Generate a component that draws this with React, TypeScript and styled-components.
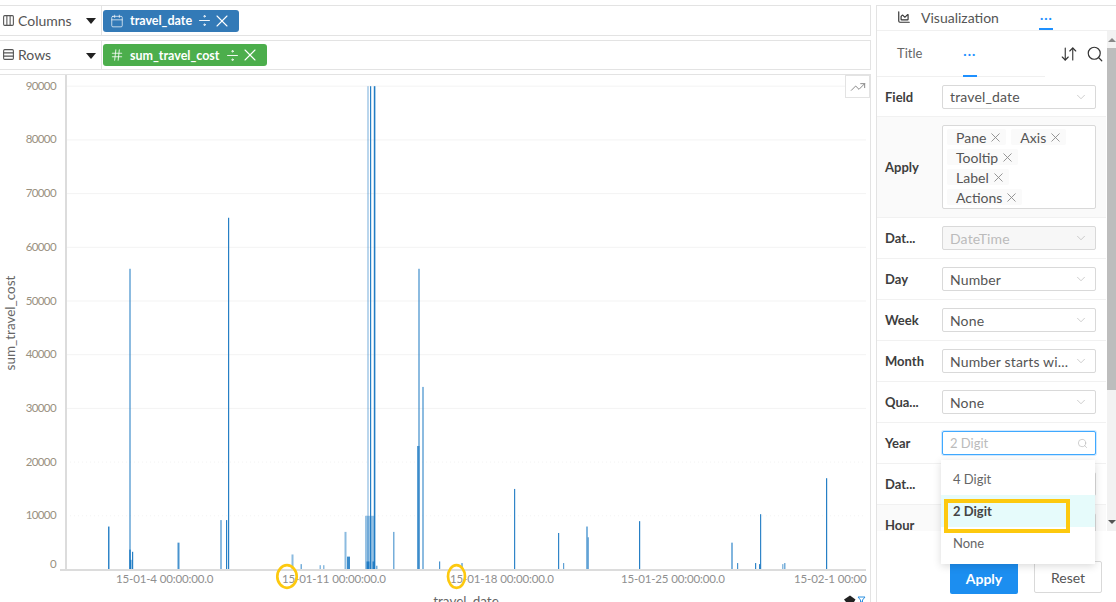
import React from "react";
import styled, { createGlobalStyle } from "styled-components";
import {
  Calendar,
  ChartArea,
  Columns3,
  Hash,
  Search,
  X,
  ChevronDown,
  Divide,
  Rows3,
  TrendingUp,
  ArrowDownUp,
} from "lucide-react";

const GlobalStyle = createGlobalStyle`
  html, body {
    margin: 0;
    padding: 0;
    background: #fff;
    overflow: hidden;
  }
  body {
    font-family: "Lato", "Open Sans", sans-serif;
    color: #555;
  }
`;

const Page = styled.div`
  width: 1116px;
  height: 602px;
  display: flex;
  overflow: hidden;
  background: #fff;
`;

const LeftColumn = styled.div`
  width: 871px;
  flex: none;
  display: flex;
  flex-direction: column;
  padding-top: 5px;
  gap: 4px;
`;

const ShelfBar = styled.div`
  height: 29px;
  display: flex;
  align-items: center;
  border-top: 1px solid #e3e3e3;
  border-bottom: 1px solid #e3e3e3;
  border-right: 1px solid #e3e3e3;
`;

const ShelfName = styled.div`
  width: 102px;
  height: 100%;
  flex: none;
  display: flex;
  align-items: center;
  gap: 3px;
  padding-left: 2px;
  box-sizing: border-box;
  font-size: 14px;
  color: #555;
  border-right: 1px solid #e3e3e3;
  position: relative;
`;

const Caret = styled.span`
  position: absolute;
  right: 5px;
  top: 12px;
  border-left: 5px solid transparent;
  border-right: 5px solid transparent;
  border-top: 6px solid #222;
`;

const Pill = styled.div<{ $color: string }>`
  margin: 1px 0 0 1px;
  height: 22px;
  display: flex;
  align-items: center;
  gap: 4px;
  padding: 0 7px;
  border-radius: 3px;
  background: ${(p) => p.$color};
  color: #fff;
  font-size: 12.5px;
  font-weight: 700;
`;

const PillLead = styled.span`
  display: flex;
  margin-right: 2px;
  color: rgba(255, 255, 255, 0.8);
`;

const PillClose = styled(X)`
  margin-left: -5px;
`;

const PlotArea = styled.div`
  flex: 1;
  border-top: 1px solid #e3e3e3;
  border-right: 1px solid #e3e3e3;
  position: relative;
`;

const ChartSvg = styled.svg`
  display: block;
`;

const TickLabel = styled.text`
  font-family: "Lato", sans-serif;
  font-size: 11.5px;
  letter-spacing: -0.6px;
  fill: #99917f;
`;

const XLabel = styled.text`
  font-family: "Lato", sans-serif;
  font-size: 11.5px;
  letter-spacing: -0.15px;
  fill: #8f8f8f;
`;

const AxisTitle = styled.text`
  font-family: "Lato", sans-serif;
  font-size: 13.5px;
  fill: #666;
  text-anchor: middle;
`;

const TrendButton = styled.div`
  position: absolute;
  top: 0;
  right: 0;
  width: 25px;
  height: 23px;
  display: flex;
  align-items: center;
  justify-content: center;
  border: 1px solid #e3e3e3;
  box-sizing: border-box;
  color: #777;
  background: #fff;
`;

const Gutter = styled.div`
  width: 5px;
  flex: none;
`;

const SidePanel = styled.div`
  width: 240px;
  flex: none;
  margin-top: 5px;
  border-top: 1px solid #e3e3e3;
  border-left: 1px solid #e3e3e3;
  display: flex;
  flex-direction: column;
  position: relative;
`;

const TabRow = styled.div`
  height: 22px;
  flex: none;
  display: flex;
  align-items: center;
  border-bottom: 1px solid #f0f0f0;
  font-size: 14px;
  color: #555;
  padding: 0 0 2px 20px;
  gap: 10px;
  position: relative;
  z-index: 1;
`;

const Dots = styled.span`
  color: #1e90ff;
  font-weight: 700;
  letter-spacing: 1px;
  font-size: 12px;
`;

const TabDots = styled(Dots)`
  margin-left: 31px;
`;

const TabUnderline = styled.span<{ $left: number }>`
  position: absolute;
  left: ${(p) => p.$left}px;
  bottom: 0;
  width: 14px;
  height: 2px;
  background: #1e90ff;
`;

const ScrollBody = styled.div`
  height: 500px;
  display: flex;
  position: relative;
  overflow: hidden;
`;

const Form = styled.div`
  width: 229px;
  flex: none;
`;

const SubTabs = styled.div`
  height: 46px;
  display: flex;
  align-items: center;
  position: relative;
  font-size: 13px;
  color: #666;
  padding: 0 0 2px 20px;
  box-sizing: border-box;
`;

const SubTabsLine = styled.span`
  position: absolute;
  left: 0;
  bottom: 0;
  width: 168px;
  height: 1px;
  background: #f0f0f0;
`;

const SubTabsDots = styled(Dots)`
  margin-left: 41px;
`;

const SubTools = styled.div`
  position: absolute;
  right: 2px;
  top: 14px;
  display: flex;
  gap: 8px;
  color: #333;
`;

const FieldRow = styled.div<{ $height?: number; $shade?: boolean }>`
  height: ${(p) => p.$height ?? 41}px;
  display: flex;
  align-items: center;
  box-sizing: border-box;
  border-bottom: 1px solid #f1f1f1;
  background: ${(p) => (p.$shade ? "#fafafa" : "#fff")};
  padding-left: 8px;
`;

const FieldLabel = styled.div`
  width: 57px;
  flex: none;
  font-size: 13px;
  font-weight: 700;
  color: #3d3d3d;
`;

const SelectBox = styled.div<{ $focus?: boolean; $muted?: boolean }>`
  width: 154px;
  height: 24px;
  box-sizing: border-box;
  border: 1px solid ${(p) => (p.$focus ? "#40a9ff" : "#d9d9d9")};
  box-shadow: ${(p) => (p.$focus ? "0 0 0 1px rgba(24,144,255,.2)" : "none")};
  border-radius: 2px;
  display: flex;
  align-items: center;
  justify-content: space-between;
  padding: 0 7px;
  font-size: ${(p) => (p.$focus ? 13 : 14)}px;
  letter-spacing: ${(p) => (p.$focus ? 0 : 0.15)}px;
  color: ${(p) => (p.$muted ? "#bbb" : "#555")};
  background: ${(p) => (p.$muted && !p.$focus ? "#f7f7f7" : "#fff")};
  white-space: nowrap;
  overflow: hidden;
`;

const TagBox = styled.div`
  width: 154px;
  height: 84px;
  box-sizing: border-box;
  border: 1px solid #d9d9d9;
  border-radius: 2px;
  padding: 3px 24px 3px 4px;
  display: flex;
  flex-wrap: wrap;
  align-content: flex-start;
  gap: 4px 5px;
  background: #fff;
`;

const Tag = styled.span`
  height: 16px;
  display: inline-flex;
  align-items: center;
  gap: 2px;
  padding: 0 3px 0 9px;
  background: #fafafa;
  font-size: 14px;
  color: #555;
  border-radius: 2px;
`;

const Scrollbar = styled.div`
  width: 10px;
  flex: none;
  margin-left: auto;
  background: #f2f2f2;
  display: flex;
  flex-direction: column;
  align-items: center;
  position: relative;
`;

const ScrollThumb = styled.div`
  position: absolute;
  top: 17px;
  left: 0;
  width: 100%;
  height: 342px;
  background: #bdbdbd;
`;

const ArrowUp = styled.span`
  position: absolute;
  top: 7px;
  border-left: 4px solid transparent;
  border-right: 4px solid transparent;
  border-bottom: 4px solid #888;
`;

const ArrowDown = styled.span`
  position: absolute;
  bottom: 7px;
  border-left: 4px solid transparent;
  border-right: 4px solid transparent;
  border-top: 4px solid #555;
`;

const Dropdown = styled.div`
  position: absolute;
  left: 64px;
  top: 454px;
  width: 154px;
  height: 104px;
  padding: 3px 0;
  box-sizing: border-box;
  background: #fff;
  box-shadow: 0 2px 8px rgba(0, 0, 0, 0.15);
  z-index: 3;
  display: flex;
  flex-direction: column;
`;

const DropOption = styled.div<{ $active?: boolean }>`
  height: 32px;
  display: flex;
  align-items: center;
  padding-left: 12px;
  font-size: 13px;
  color: ${(p) => (p.$active ? "#444" : "#666")};
  font-weight: ${(p) => (p.$active ? 700 : 400)};
  background: ${(p) => (p.$active ? "#e6fbfb" : "#fff")};
`;

const Highlight = styled.div`
  position: absolute;
  left: 67px;
  top: 493px;
  width: 126px;
  height: 34px;
  box-sizing: border-box;
  border: 4px solid #fdc90f;
  z-index: 4;
`;

const Footer = styled.div`
  display: flex;
  align-items: flex-start;
  gap: 16px;
  padding: 31px 0 0 73px;
  position: relative;
  z-index: 2;
`;

const ApplyButton = styled.button`
  width: 68px;
  height: 32px;
  border: none;
  border-radius: 2px;
  background: #1c8ef0;
  color: #fff;
  font: 700 14px "Lato", sans-serif;
`;

const ResetButton = styled.button`
  width: 68px;
  height: 32px;
  margin-top: -1px;
  border: 1px solid #d9d9d9;
  border-radius: 2px;
  background: #fff;
  color: #555;
  font: 400 14px "Lato", sans-serif;
`;

const AXIS_Y = 569.5;
const PX_PER_UNIT = 53.7 / 10000;
const TOP = 75;

// x, value, width, opacity
const BARS: [number, number, number, number][] = [
  [108, 8000, 1.5, 0.9],
  [129, 56000, 2, 0.5],
  [129, 3700, 2, 0.7],
  [130, 1800, 1.5, 0.9],
  [132, 3300, 1.2, 0.95],
  [177.5, 5000, 2, 0.8],
  [220, 9200, 2, 0.5],
  [226, 9200, 1.2, 0.95],
  [228, 65500, 1.2, 0.95],
  [291.5, 2800, 2, 0.5],
  [300.5, 1000, 1.5, 0.6],
  [319.5, 800, 1.5, 0.5],
  [323, 800, 1.5, 0.5],
  [344.5, 7000, 2, 0.5],
  [347, 2400, 3, 0.85],
  [365, 10000, 2, 0.45],
  [367, 90000, 2, 0.3],
  [367, 10000, 7, 0.45],
  [370, 90000, 1.2, 0.95],
  [374, 90000, 1.2, 0.95],
  [373, 90000, 3, 0.2],
  [366.5, 1500, 3, 0.9],
  [372.5, 1500, 2, 0.9],
  [376, 700, 1.5, 0.6],
  [393, 7000, 1.5, 0.6],
  [417, 23000, 2.5, 0.7],
  [418, 56000, 2, 0.5],
  [422, 34000, 2, 0.5],
  [439, 1500, 1.2, 0.8],
  [461, 1200, 2, 0.5],
  [514, 15000, 1.2, 0.9],
  [558, 6800, 1.2, 0.9],
  [563, 1200, 1.2, 0.7],
  [586, 8000, 2, 0.55],
  [587.5, 6000, 1.5, 0.6],
  [639, 9000, 1.2, 0.95],
  [731, 5000, 2, 0.55],
  [737, 1200, 1.2, 0.8],
  [755, 1200, 1.2, 0.9],
  [759, 1000, 1.2, 0.9],
  [760, 10300, 1.2, 0.9],
  [782, 1000, 1.5, 0.5],
  [784, 1200, 1.5, 0.6],
  [826, 17000, 1.2, 0.95],
];

const Y_TICKS = [0, 10000, 20000, 30000, 40000, 50000, 60000, 70000, 80000, 90000];

const X_TICKS = [
  { x: 116, label: "15-01-4 00:00:00.0" },
  { x: 282, label: "15-01-11 00:00:00.0" },
  { x: 450, label: "15-01-18 00:00:00.0" },
  { x: 621, label: "15-01-25 00:00:00.0" },
  { x: 794, label: "15-02-1 00:00" },
];

const Chart = () => (
  <ChartSvg width={870} height={527} viewBox={`0 ${TOP} 870 527`}>
    {Y_TICKS.slice(1).map((v) => (
      <line
        key={v}
        x1={66}
        x2={866}
        y1={AXIS_Y - v * PX_PER_UNIT}
        y2={AXIS_Y - v * PX_PER_UNIT}
        stroke="#f3f3f3"
        strokeDasharray={v < 30000 ? "1 3" : undefined}
      />
    ))}
    {Y_TICKS.map((v) => (
      <TickLabel
        key={v}
        x={56}
        y={AXIS_Y - v * PX_PER_UNIT + (v === 0 ? -1.5 : 3.5)}
        textAnchor="end"
      >
        {v}
      </TickLabel>
    ))}
    {BARS.map(([x, v, w, o], i) => (
      <rect
        key={i}
        x={x}
        y={AXIS_Y - v * PX_PER_UNIT}
        width={w}
        height={v * PX_PER_UNIT}
        fill="#1a78c2"
        opacity={o}
      />
    ))}
    <line x1={66} x2={66} y1={75} y2={570} stroke="#dcdcdc" strokeWidth={2} />
    <line x1={60} x2={866} y1={570} y2={570} stroke="#dcdcdc" strokeWidth={2} />
    {X_TICKS.map((t) => (
      <XLabel key={t.x} x={t.x} y={583}>
        {t.label}
      </XLabel>
    ))}
    <AxisTitle x={15} y={323} transform="rotate(-90 15 323)">
      sum_travel_cost
    </AxisTitle>
    <AxisTitle x={466} y={606}>
      travel_date
    </AxisTitle>
    <ellipse cx={287} cy={576.5} rx={9.7} ry={11.3} fill="none" stroke="#fdc90f" strokeWidth={2.7} />
    <ellipse cx={456.5} cy={576.5} rx={8.5} ry={11.3} fill="none" stroke="#fdc90f" strokeWidth={2.7} />
    <path d="M844 599.5 L850 595.5 L855.5 599.5 L854 602 L846 602 Z" fill="#222" />
    <path d="M858 597 H865 L862.5 600 V602 H860.5 V600 Z" fill="none" stroke="#2a8fe0" strokeWidth={1} />
  </ChartSvg>
);

const FIELDS: { label: string; value: string; muted?: boolean }[] = [
  { label: "Dat...", value: "DateTime", muted: true },
  { label: "Day", value: "Number" },
  { label: "Week", value: "None" },
  { label: "Month", value: "Number starts wi..." },
  { label: "Qua...", value: "None" },
];

const TAGS = ["Pane", "Axis", "Tooltip", "Label", "Actions"];

export default function App() {
  return (
    <>
      <GlobalStyle />
      <Page>
        <LeftColumn>
          <ShelfBar>
            <ShelfName>
              <Columns3 size={13} />
              Columns
              <Caret />
            </ShelfName>
            <Pill $color="#337ab7">
              <PillLead>
                <Calendar size={14} strokeWidth={1.5} />
              </PillLead>
              travel_date
              <Divide size={17} strokeWidth={1.3} />
              <PillClose size={20} strokeWidth={1.3} />
            </Pill>
          </ShelfBar>
          <ShelfBar>
            <ShelfName>
              <Rows3 size={13} />
              Rows
              <Caret />
            </ShelfName>
            <Pill $color="#4cae4c">
              <PillLead>
                <Hash size={14} strokeWidth={1.8} />
              </PillLead>
              sum_travel_cost
              <Divide size={17} strokeWidth={1.3} />
              <PillClose size={20} strokeWidth={1.3} />
            </Pill>
          </ShelfBar>
          <PlotArea>
            <Chart />
            <TrendButton>
              <TrendingUp size={16} strokeWidth={1.3} />
            </TrendButton>
          </PlotArea>
        </LeftColumn>
        <Gutter />
        <SidePanel>
          <TabRow>
            <ChartArea size={14} color="#333" />
            <span>Visualization</span>
            <TabDots>···</TabDots>
            <TabUnderline $left={162} />
          </TabRow>
          <ScrollBody>
            <Form>
              <SubTabs>
                Title
                <SubTabsDots>···</SubTabsDots>
                <SubTabsLine />
                <TabUnderline $left={86} />
                <SubTools>
                  <ArrowDownUp size={18} strokeWidth={1.5} />
                  <Search size={18} strokeWidth={1.6} />
                </SubTools>
              </SubTabs>
              <FieldRow $height={40}>
                <FieldLabel>Field</FieldLabel>
                <SelectBox>
                  travel_date
                  <ChevronDown size={14} strokeWidth={1} color="#aaa" />
                </SelectBox>
              </FieldRow>
              <FieldRow $height={101} $shade>
                <FieldLabel>Apply</FieldLabel>
                <TagBox>
                  {TAGS.map((t) => (
                    <Tag key={t}>
                      {t}
                      <X size={15} strokeWidth={1.4} color="#888" />
                    </Tag>
                  ))}
                </TagBox>
              </FieldRow>
              {FIELDS.map((f) => (
                <FieldRow key={f.label}>
                  <FieldLabel>{f.label}</FieldLabel>
                  <SelectBox $muted={f.muted}>
                    {f.value}
                    <ChevronDown size={14} strokeWidth={1} color="#aaa" />
                  </SelectBox>
                </FieldRow>
              ))}
              <FieldRow>
                <FieldLabel>Year</FieldLabel>
                <SelectBox $focus $muted>
                  2 Digit
                  <Search size={11} strokeWidth={1.5} color="#bbb" />
                </SelectBox>
              </FieldRow>
              <FieldRow>
                <FieldLabel>Dat...</FieldLabel>
                <SelectBox />
              </FieldRow>
              <FieldRow $shade>
                <FieldLabel>Hour</FieldLabel>
                <SelectBox />
              </FieldRow>
            </Form>
            <Scrollbar>
              <ArrowUp />
              <ScrollThumb />
              <ArrowDown />
            </Scrollbar>
          </ScrollBody>
          <Footer>
            <ApplyButton>Apply</ApplyButton>
            <ResetButton>Reset</ResetButton>
          </Footer>
          <Dropdown>
            <DropOption>4 Digit</DropOption>
            <DropOption $active>2 Digit</DropOption>
            <DropOption>None</DropOption>
          </Dropdown>
          <Highlight />
        </SidePanel>
      </Page>
    </>
  );
}
